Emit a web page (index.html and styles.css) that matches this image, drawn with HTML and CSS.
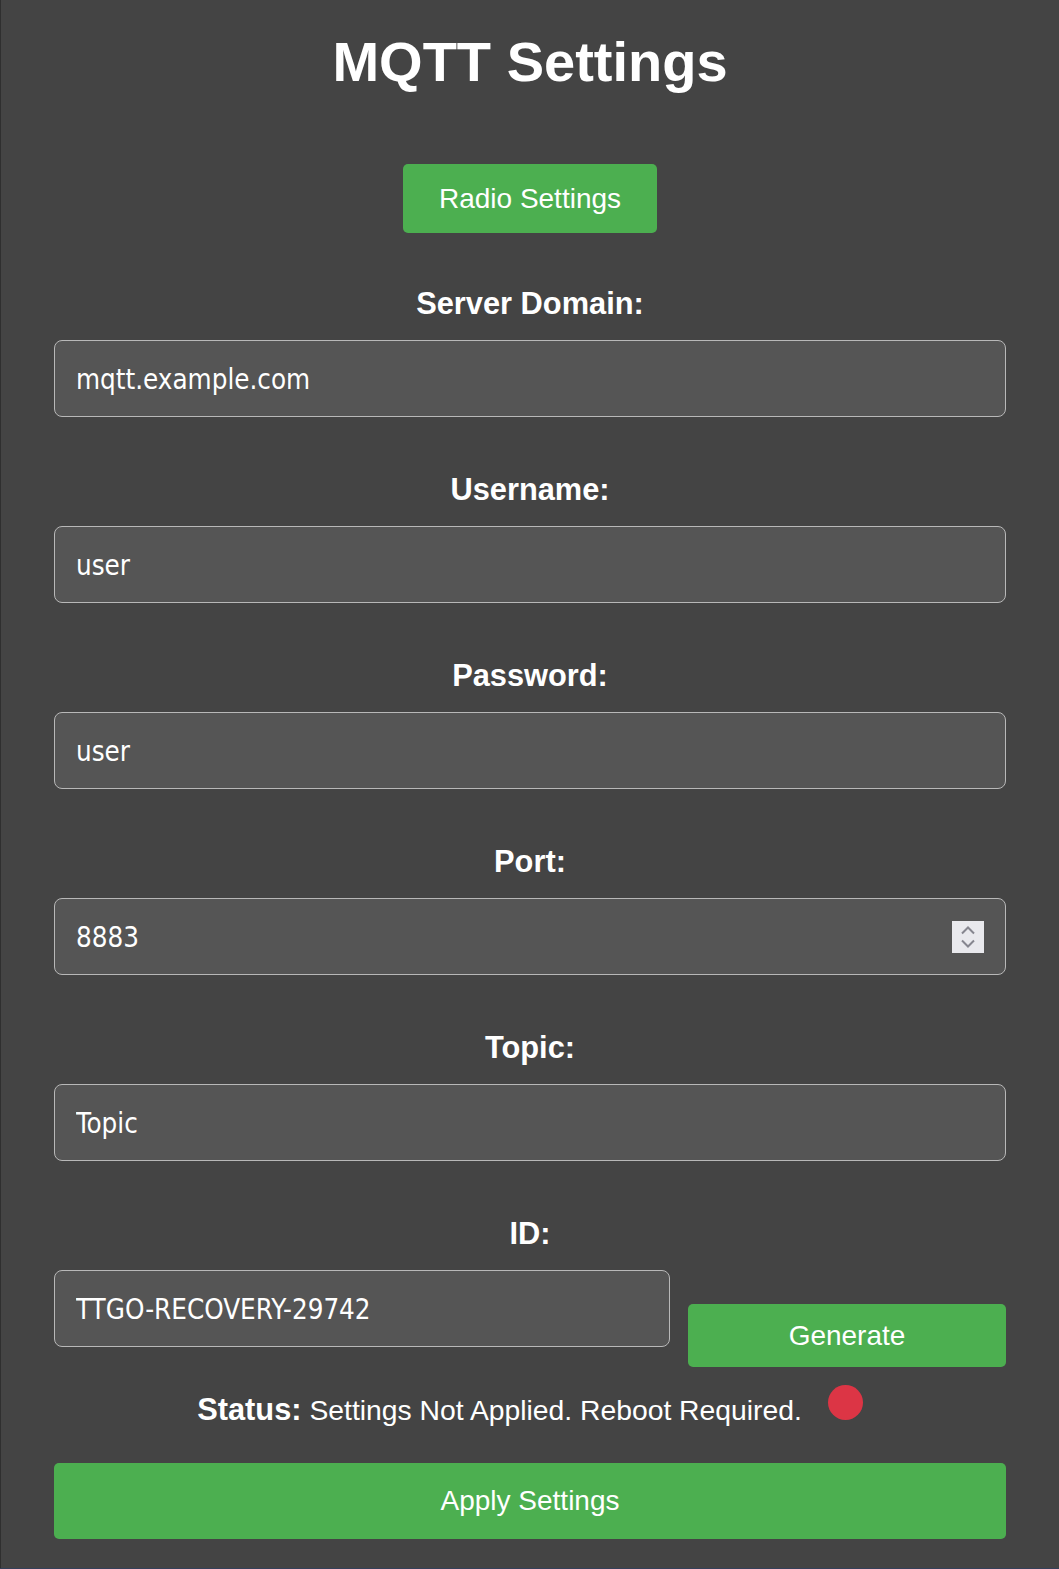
FILE: index.html
```html
<!DOCTYPE html>
<html lang="en">
<head>
<meta charset="utf-8">
<title>MQTT Settings</title>
<link rel="stylesheet" href="styles.css">
</head>
<body>
<div class="page">
  <h1 class="title">MQTT Settings</h1>
  <div class="nav">
    <button class="btn btn-nav" type="button">Radio Settings</button>
  </div>
  <form class="form">
    <div class="field">
      <label class="label">Server Domain:</label>
      <input class="input" type="text" value="mqtt.example.com">
    </div>
    <div class="field">
      <label class="label">Username:</label>
      <input class="input" type="text" value="user">
    </div>
    <div class="field">
      <label class="label">Password:</label>
      <input class="input" type="text" value="user">
    </div>
    <div class="field">
      <label class="label">Port:</label>
      <div class="input input-number">
        <input class="input-inner" type="text" value="8883">
        <span class="spin">
          <svg width="32" height="32" viewBox="0 0 32 32"><polyline points="10,12.5 16,6.5 22,12.5" fill="none" stroke="#86868f" stroke-width="2"/><polyline points="10,19.5 16,25.5 22,19.5" fill="none" stroke="#86868f" stroke-width="2"/></svg>
        </span>
      </div>
    </div>
    <div class="field">
      <label class="label">Topic:</label>
      <input class="input" type="text" value="Topic">
    </div>
    <div class="field">
      <label class="label">ID:</label>
      <div class="id-row">
        <input class="input" type="text" value="TTGO-RECOVERY-29742">
        <button class="btn btn-gen" type="button">Generate</button>
      </div>
    </div>
    <p class="status"><strong class="status-key">Status:</strong> Settings Not Applied. Reboot Required.<span class="dot"></span></p>
    <button class="btn btn-apply" type="button">Apply Settings</button>
  </form>
</div>
</body>
</html>
```

FILE: styles.css
```css
html {
  background: #36405a;
}
body {
  margin: 0;
  font-family: "Liberation Sans", Arial, sans-serif;
  color: #ffffff;
}
.page {
  background: #444444;
  border-left: 1px solid #2f2f2f;
  padding: 30px 0 29px;
}
.title {
  margin: 0;
  font-size: 56px;
  line-height: 64px;
  font-weight: bold;
  text-align: center;
}
.nav {
  margin-top: 70px;
  display: flex;
  justify-content: center;
}
.btn {
  font-family: "Liberation Sans", Arial, sans-serif;
  font-size: 28px;
  color: #ffffff;
  background: #4caf50;
  border: none;
  border-radius: 5px;
  cursor: pointer;
  display: flex;
  align-items: center;
  justify-content: center;
  padding: 0;
}
.btn-nav {
  height: 69px;
  padding: 0 36px;
}
.form {
  width: 952px;
  margin: 53px auto 0;
  display: flex;
  flex-direction: column;
}
.field + .field {
  margin-top: 55px;
}
.label {
  display: block;
  font-size: 30.8px;
  line-height: 35px;
  font-weight: bold;
  text-align: center;
  margin-bottom: 19px;
}
.input {
  box-sizing: border-box;
  width: 100%;
  height: 77px;
  margin: 0;
  padding: 0 21px;
  background: #555555;
  border: 1px solid #b8b8b8;
  border-radius: 8px;
  color: #ffffff;
  font-family: "DejaVu Sans Condensed", "DejaVu Sans", sans-serif;
  font-stretch: condensed;
  font-size: 27.5px;
  outline: none;
}
.input-number {
  display: flex;
  align-items: center;
}
.input-inner {
  flex: 1;
  min-width: 0;
  border: none;
  background: transparent;
  color: #ffffff;
  font: inherit;
  font-stretch: condensed;
  padding: 0;
  outline: none;
}
.spin {
  width: 32px;
  height: 32px;
  background: #e9e9ed;
  display: flex;
}
.id-row {
  display: grid;
  grid-template-columns: 616px 1fr;
  column-gap: 18px;
  align-items: start;
}
.btn-gen {
  margin-top: 34px;
  height: 63px;
}
.status {
  margin: 18px 0 0;
  text-align: center;
  font-size: 28.3px;
}
.status-key {
  font-weight: bold;
  font-size: 30.8px;
}
.dot {
  display: inline-block;
  width: 35px;
  height: 35px;
  border-radius: 50%;
  background: #dc3545;
  margin-left: 26px;
}
.btn-apply {
  margin-top: 35px;
  height: 76px;
  width: 100%;
}
```
